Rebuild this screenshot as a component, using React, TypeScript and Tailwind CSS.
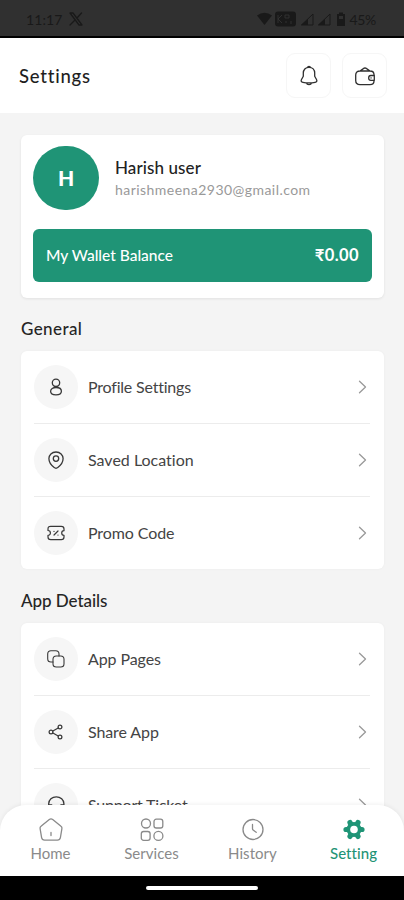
import type { ReactNode } from "react";

const glyph = {
  fill: "none",
  stroke: "currentColor",
  strokeLinecap: "round" as const,
  strokeLinejoin: "round" as const,
};

function StatusBar() {
  return (
    <div className="flex h-[38px] shrink-0 items-center justify-between border-b-2 border-black bg-[#303030] pt-[2px] pr-[28px] pl-[26px] text-[#191919]">
      <div className="flex items-center gap-[7px]">
        <span className="text-[14px] tracking-[0.1px]">11:17</span>
        <svg width="14" height="14" viewBox="0 0 14 14" {...glyph} strokeWidth="1.3">
          <path d="M1 1h3l9 12h-3zM12.5 1 8 6M6 8l-5 5" />
        </svg>
      </div>
      <div className="flex items-center">
        <svg width="88" height="16" viewBox="0 0 88 16" fill="currentColor">
          <path d="M0 4.500Q7.500-1 15 4.500L7.500 14z" />
          <rect x="18" y="0.500" width="21" height="15" rx="3" />
          <path d="M21 4v8M21 8l4-4M21 8l4 4M28 4v3h4V4zM29 12v-2M34 10v3" stroke="#303030" fill="none" />
          <path d="M56 3v11H44.500zM73 3v11H61.500z" fill="none" stroke="currentColor" />
          <path d="M51 8v6h-7zM68 8v6h-7z" />
          <path d="M82 1.500h4V3h2v12h-8V3h2z" />
          <path d="M82 5h4v3h-4z" fill="#303030" />
        </svg>
        <span className="ml-[4px] text-[14px] tracking-[-0.3px]">45%</span>
      </div>
    </div>
  );
}

function HeaderButton({ children }: { children: ReactNode }) {
  return (
    <button className="flex size-[45px] items-center justify-center rounded-[9px] border-[1.5px] border-[#f6f6f6] text-[#303030]">
      {children}
    </button>
  );
}

function Header() {
  return (
    <header className="flex h-[75px] shrink-0 items-center justify-between bg-white pr-[17px] pl-[19px]">
      <h1 className="pt-[2px] text-[18.500px] font-medium tracking-[0.75px] text-[#1f1f1f]">Settings</h1>
      <div className="flex gap-[11px]">
        <HeaderButton>
          <svg width="20" height="22" viewBox="0 0 20 22" {...glyph} strokeWidth="1.3">
            <path d="M8.300 2.700a1.800 1.800 0 0 1 3.400 0M10 2.300c-3.600 0-5.700 2.600-5.700 5.800v3.200L2.500 14.500c-.8 1.500-.2 2.600 1.400 2.900 4 .7 8.200.7 12.200 0 1.600-.3 2.200-1.400 1.400-2.900l-1.800-3.200V8.100c0-3.200-2.100-5.800-5.700-5.800zM7.500 18c.4 2.200 4.600 2.200 5 0" />
          </svg>
        </HeaderButton>
        <HeaderButton>
          <svg width="22" height="22" viewBox="0 0 22 22" {...glyph} strokeWidth="1.300">
            <path d="M20 9.900V9.600c0-2.300-1.600-3.600-4-3.600H6C3.400 6 1.700 7.600 1.700 10v5.500C1.700 18 3.400 19.600 6 19.600h10c2.500 0 4-1.400 4-3.700M6 6l3.400-2.400c1-.8 2.200-.8 3.200 0L16 6" />
            <path d="M20.300 10.500h-3.400c-3 0-3 4.800 0 4.800h3.400zM17 12.900h.1" />
          </svg>
        </HeaderButton>
      </div>
    </header>
  );
}

function ProfileCard() {
  return (
    <section className="h-[163px] rounded-[6px] bg-white px-[12px] pt-[11px] shadow-[0_1px_3px_rgba(0,0,0,0.08)]">
      <div className="flex items-center gap-[16px]">
        <div className="flex h-[64px] w-[66px] items-center justify-center rounded-full bg-[#1f9476] text-[21px] font-black text-white">
          H
        </div>
        <div>
          <p className="text-[17px] leading-[22px] font-medium tracking-[0.1px] text-[#222]">Harish user</p>
          <p className="text-[14px] leading-[21px] tracking-[0.46px] text-[#999]">harishmeena2930@gmail.com</p>
        </div>
      </div>
      <div className="mt-[19px] flex h-[53px] items-center justify-between rounded-[6px] bg-[#1f9476] px-[13px] text-white">
        <span className="text-[15.500px] font-medium">My Wallet Balance</span>
        <span className="text-[16.500px] font-bold tracking-[0.4px]">₹0.00</span>
      </div>
    </section>
  );
}

function UserIcon() {
  return (
    <svg width="20" height="20" viewBox="0 0 20 20" {...glyph} strokeWidth="1.3">
      <circle cx="10" cy="5.800" r="3.700" />
      <path d="M10 10.500c-3 0-5.400 1.500-5.400 3.800s2.400 3.600 5.400 3.600 5.400-1.300 5.400-3.600-2.400-3.800-5.400-3.800z" />
    </svg>
  );
}

function PinIcon() {
  return (
    <svg width="20" height="20" viewBox="0 0 20 20" {...glyph} strokeWidth="1.300">
      <path d="M10 2C5.800 2 2.900 4.900 2.900 8.600c0 4 2.800 7.100 5.300 9a3 3 0 0 0 3.600 0c2.500-1.900 5.300-5 5.300-9C17.100 4.900 14.200 2 10 2z" />
      <circle cx="10" cy="8.600" r="2.700" />
    </svg>
  );
}

function CouponIcon() {
  return (
    <svg width="20" height="20" viewBox="0 0 20 20" {...glyph} strokeWidth="1.200">
      <path d="M2 7.500V6c0-2 .8-2.700 2.700-2.700h10.600C17.200 3.300 18 4 18 6v1.700a2.300 2.300 0 0 0 0 4.600V14c0 2-.8 2.700-2.700 2.700H4.700C2.800 16.700 2 16 2 14v-1.700a2.300 2.300 0 0 0 0-4.800zM8 12l4-4M8 8.300v.1M12 12v.1" />
    </svg>
  );
}

function PagesIcon() {
  return (
    <svg width="20" height="20" viewBox="0 0 20 20" {...glyph} strokeWidth="1.100">
      <path d="M7 13H5c-2.600 0-3.300-.7-3.300-3.300V5C1.700 2.400 2.400 1.700 5 1.700h4.700C12.300 1.700 13 2.400 13 5v2" />
      <rect x="7" y="7" width="11" height="11" rx="3.300" />
    </svg>
  );
}

function ShareIcon() {
  return (
    <svg width="20" height="20" viewBox="0 0 20 20" {...glyph} strokeWidth="1.200">
      <circle cx="5" cy="10" r="1.900" />
      <circle cx="14" cy="5" r="1.900" />
      <circle cx="14" cy="15" r="1.900" />
      <path d="m6.900 9 5.300-3.100M6.900 11l5.300 3.100" />
    </svg>
  );
}

function SupportIcon() {
  return (
    <svg width="20" height="20" viewBox="0 0 20 20" {...glyph} strokeWidth="1.300">
      <path d="M2.700 11V8.800a7.600 7 0 0 1 15.200 0V11M2.700 9.800h3v5h-3zM14.900 9.800h3v5h-3z" />
    </svg>
  );
}

function Row({ icon, label, tracking }: { icon: ReactNode; label: string; tracking: string }) {
  return (
    <li className="flex h-[73px] shrink-0 items-center border-b border-[#ececec] last:h-[72px] last:border-0">
      <span className="flex size-[44px] items-center justify-center rounded-full bg-[#f6f6f6] text-[#383838]">
        {icon}
      </span>
      <span className={`ml-[10px] flex-1 text-[16px] text-[#444] ${tracking}`}>{label}</span>
      <svg className="mr-[3px] text-[#999]" width="9" height="14" viewBox="0 0 9 14" {...glyph} strokeWidth="1.300">
        <path d="m1.500 1.300 6 5.700-6 5.700" />
      </svg>
    </li>
  );
}

function Group({ title, heading, children }: { title: string; heading: string; children: ReactNode }) {
  return (
    <section>
      <h2 className={`flex items-center text-[17px] font-medium text-[#252525] ${heading}`}>{title}</h2>
      <ul className="rounded-[6px] bg-white pr-[14px] pl-[13px] shadow-[0_0_3px_rgba(0,0,0,0.04)]">{children}</ul>
    </section>
  );
}

function NavItem({ icon, label, active = false }: { icon: ReactNode; label: string; active?: boolean }) {
  return (
    <button className={`flex flex-1 flex-col items-center pt-[12px] ${active ? "text-[#1f9476]" : "text-[#8a8a8a]"}`}>
      {icon}
      <span className={`mt-px text-[15px] leading-[20px] tracking-[0.05px] ${active ? "font-medium" : ""}`}>
        {label}
      </span>
    </button>
  );
}

function BottomNav() {
  return (
    <nav className="relative -mt-[26px] flex h-[71px] shrink-0 rounded-t-[26px] bg-white shadow-[0_-1px_4px_rgba(0,0,0,0.06)]">
      <NavItem
        label="Home"
        icon={
          <svg width="26" height="25" viewBox="0 0 26 25" {...glyph} strokeWidth="1.300">
            <path d="M11.300 2.500 3 9.200c-.8.600-1.100 1.500-.9 2.500l1.500 8.900c.3 1.600 1.300 2.500 3 2.500h12.800c1.700 0 2.700-.9 3-2.500l1.500-8.900c.2-1-.1-1.900-.9-2.500l-8.300-6.700c-1.100-.8-2.300-.8-3.400 0zM13 15.500v3" />
          </svg>
        }
      />
      <NavItem
        label="Services"
        icon={
          <svg width="26" height="25" viewBox="0 0 26 25" {...glyph} strokeWidth="1.300">
            <circle cx="7" cy="6.500" r="4.500" />
            <rect x="15" y="2.200" width="8.800" height="8.800" rx="2.300" />
            <rect x="2.300" y="14.500" width="8.800" height="8.800" rx="2.300" />
            <circle cx="19.400" cy="18.900" r="4.500" />
          </svg>
        }
      />
      <NavItem
        label="History"
        icon={
          <svg width="26" height="25" viewBox="0 0 26 25" {...glyph} strokeWidth="1.300">
            <circle cx="13" cy="12.500" r="10" />
            <path d="M12.500 7.500v4.200c0 .8.300 1.200.9 1.600l2.800 2" />
          </svg>
        }
      />
      <NavItem
        active
        label="Setting"
        icon={
          <svg width="26" height="25" viewBox="0 0 26 25" fill="currentColor">
            <g stroke="currentColor" strokeWidth="5.200" strokeLinecap="round">
              <path d="M5 12.500h16M9 5.600l8 13.800M17 5.600 9 19.400" />
            </g>
            <circle cx="13" cy="12.500" r="7.500" />
            <circle cx="13" cy="12.500" r="3.800" fill="white" />
          </svg>
        }
      />
    </nav>
  );
}

export default function App() {
  return (
    <div className="flex h-[900px] w-[404px] flex-col overflow-hidden bg-[#f4f4f4] font-[Lato,'Noto_Sans',sans-serif] [font-variant-ligatures:none]">
      <StatusBar />
      <Header />
      <main className="min-h-0 flex-1 overflow-hidden pt-[22px] pr-[20px] pl-[21px]">
        <ProfileCard />
        <Group title="General" heading="h-[53px] pt-[9px] tracking-[0.4px]">
          <Row icon={<UserIcon />} label="Profile Settings" tracking="tracking-[-0.2px]" />
          <Row icon={<PinIcon />} label="Saved Location" tracking="tracking-[0px]" />
          <Row icon={<CouponIcon />} label="Promo Code" tracking="tracking-[-0.1px]" />
        </Group>
        <Group title="App Details" heading="h-[54px] pt-[10px] tracking-[-0.05px]">
          <Row icon={<PagesIcon />} label="App Pages" tracking="tracking-[-0.1px]" />
          <Row icon={<ShareIcon />} label="Share App" tracking="tracking-[-0.1px]" />
          <Row icon={<SupportIcon />} label="Support Ticket" tracking="tracking-[-0.2px]" />
        </Group>
      </main>
      <BottomNav />
      <div className="flex h-[24px] shrink-0 justify-center bg-black pt-[10px]">
        <div className="h-[4px] w-[112px] rounded-full bg-white" />
      </div>
    </div>
  );
}
